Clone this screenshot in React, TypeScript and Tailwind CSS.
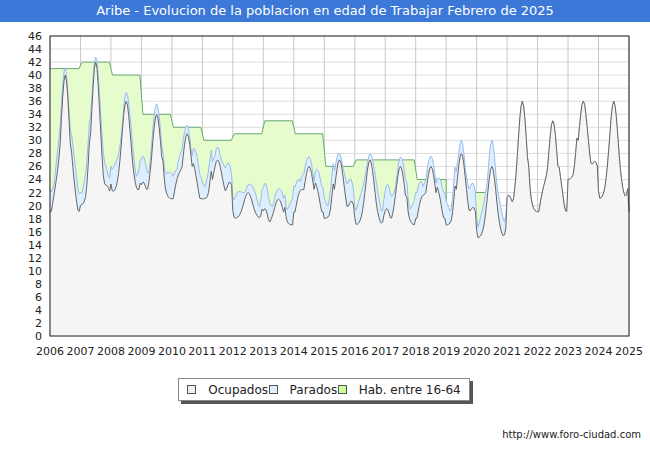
import React from "react";

const X0 = 50, X1 = 629, Y0 = 336, YT = 36;
const sx = (t: number) => X0 + ((t - 2006) / 19) * (X1 - X0);
const sy = (v: number) => Y0 - (v / 46) * (Y0 - YT);

const yrs: [number, number, number][] = [
  [19, 40, 40], [20, 42, 42], [22, 36, 37], [21, 34, 34], [21, 31, 32], [21, 27, 29],
  [18, 22, 23], [17, 21, 22], [19, 26, 26], [18, 27, 28], [17, 27, 28], [17, 26, 27],
  [18, 26, 27], [17, 28, 30], [15, 26, 30], [19, 36, 36], [19, 33, 33], [24, 36, 36], [21, 36, 36],
];
const occ: [number, number][] = [];
const par: [number, number][] = [];
for (let i = 0; i < 19; i++) {
  for (let m = 0; m < 24; m++) {
    const t = 2006 + i + m / 24;
    const [b, p, pp] = yrs[i];
    const d = (m / 24 - 0.5) / 0.2;
    const g = Math.exp(-d * d);
    const wob = Math.sin(t * 11) * 2.5;
    const o = b + (p - b) * g + (g < 0.4 ? Math.max(0, wob) : 0);
    occ.push([t, o]);
    const gap = t < 2021 ? 1.5 + Math.abs(Math.sin(t * 7)) * 2.5 : 0;
    par.push([t, Math.max(o + gap * (1 - g * 0.6), b + (pp - b) * g)]);
  }
}
occ.push([2025, 19]);
par.push([2025, 19]);
const hab: [number, number, number][] = [
  [2006, 2006.95, 41], [2007, 2007.95, 42], [2008, 2008.95, 40], [2009, 2009.95, 34], [2010, 2010.95, 32],
  [2011, 2011.95, 30], [2012, 2012.95, 31], [2013, 2013.95, 33], [2014, 2014.95, 31], [2015, 2015.95, 26],
  [2016, 2017.95, 27], [2018, 2019.0, 24],
];
const habPts: [number, number][] = [];
hab.forEach(([a, b, v]) => { habPts.push([a + 0.05, v]); habPts.push([b, v]); });
const line = (pts: [number, number][]) => pts.map(([t, v]) => `${sx(t).toFixed(1)},${sy(v).toFixed(1)}`).join(" ");
const area = (pts: [number, number][]) =>
  `${sx(pts[0][0])},${Y0} ${line(pts)} ${sx(pts[pts.length - 1][0])},${Y0}`;
const habArea = `${sx(2006)},${Y0} ${line([[2006, 41], ...habPts])} ${sx(2019)},${Y0}`;
const hab2: [number, number][] = [[2019.9, 22], [2020.5, 22]];

export default function App() {
  return (
    <div className="w-[650px] h-[450px] bg-white relative" style={{ fontFamily: '"DejaVu Sans", sans-serif' }}>
      <div className="h-[22px] bg-[#3b78d8] text-white text-[13px] flex items-center justify-center">
        Aribe - Evolucion de la poblacion en edad de Trabajar Febrero de 2025
      </div>
      <svg width="650" height="340" viewBox="0 22 650 340" className="block">
        {Array.from({ length: 24 }, (_, i) => (
          <line key={i} x1={X0} x2={X1} y1={sy(i * 2)} y2={sy(i * 2)} stroke="#dddddd" />
        ))}
        {Array.from({ length: 20 }, (_, i) => (
          <line key={i} x1={sx(2006 + i)} x2={sx(2006 + i)} y1={YT} y2={Y0} stroke="#c8c8c8" />
        ))}
        <polygon points={habArea} fill="#e6fccc" />
        <polyline points={line([[2006, 41], ...habPts, [2019, 24], [2019, 20]])} fill="none" stroke="#66aa77" />
        <polygon points={`${sx(2019.9)},${Y0} ${line(hab2)} ${sx(2020.5)},${Y0}`} fill="#e6fccc" />
        <polyline points={line(hab2)} fill="none" stroke="#66aa77" />
        <polygon points={area(par)} fill="#ddeeff" />
        <polyline points={line(par)} fill="none" stroke="#99bbee" />
        <polygon points={area(occ)} fill="#f5f5f5" />
        <polyline points={line(occ)} fill="none" stroke="#666666" />
        <rect x={X0} y={YT} width={X1 - X0} height={Y0 - YT} fill="none" stroke="#222" />
        {Array.from({ length: 24 }, (_, i) => (
          <text key={i} x={42} y={sy(i * 2) + 4} fontSize="11" textAnchor="end" fill="#222">{i * 2}</text>
        ))}
        {Array.from({ length: 20 }, (_, i) => (
          <text key={i} x={sx(2006 + i)} y={355} fontSize="11" textAnchor="middle" fill="#222">{2006 + i}</text>
        ))}
      </svg>
      <div className="absolute left-[178px] top-[378px] w-[292px] h-[23px] border border-[#888] bg-white shadow-[3px_3px_0_#555] flex items-center justify-around text-[12px] text-[#222] px-2">
        <span className="flex items-center gap-3"><span className="w-[9px] h-[9px] border border-[#555] bg-[#f0f0f0]" />Ocupados</span>
        <span className="flex items-center gap-3"><span className="w-[9px] h-[9px] border border-[#555] bg-[#ddeeff]" />Parados</span>
        <span className="flex items-center gap-3"><span className="w-[9px] h-[9px] border border-[#555] bg-[#ccff99]" />Hab. entre 16-64</span>
      </div>
      <div className="absolute right-[9px] top-[427px] text-[10px] text-[#222]">http://www.foro-ciudad.com</div>
    </div>
  );
}
